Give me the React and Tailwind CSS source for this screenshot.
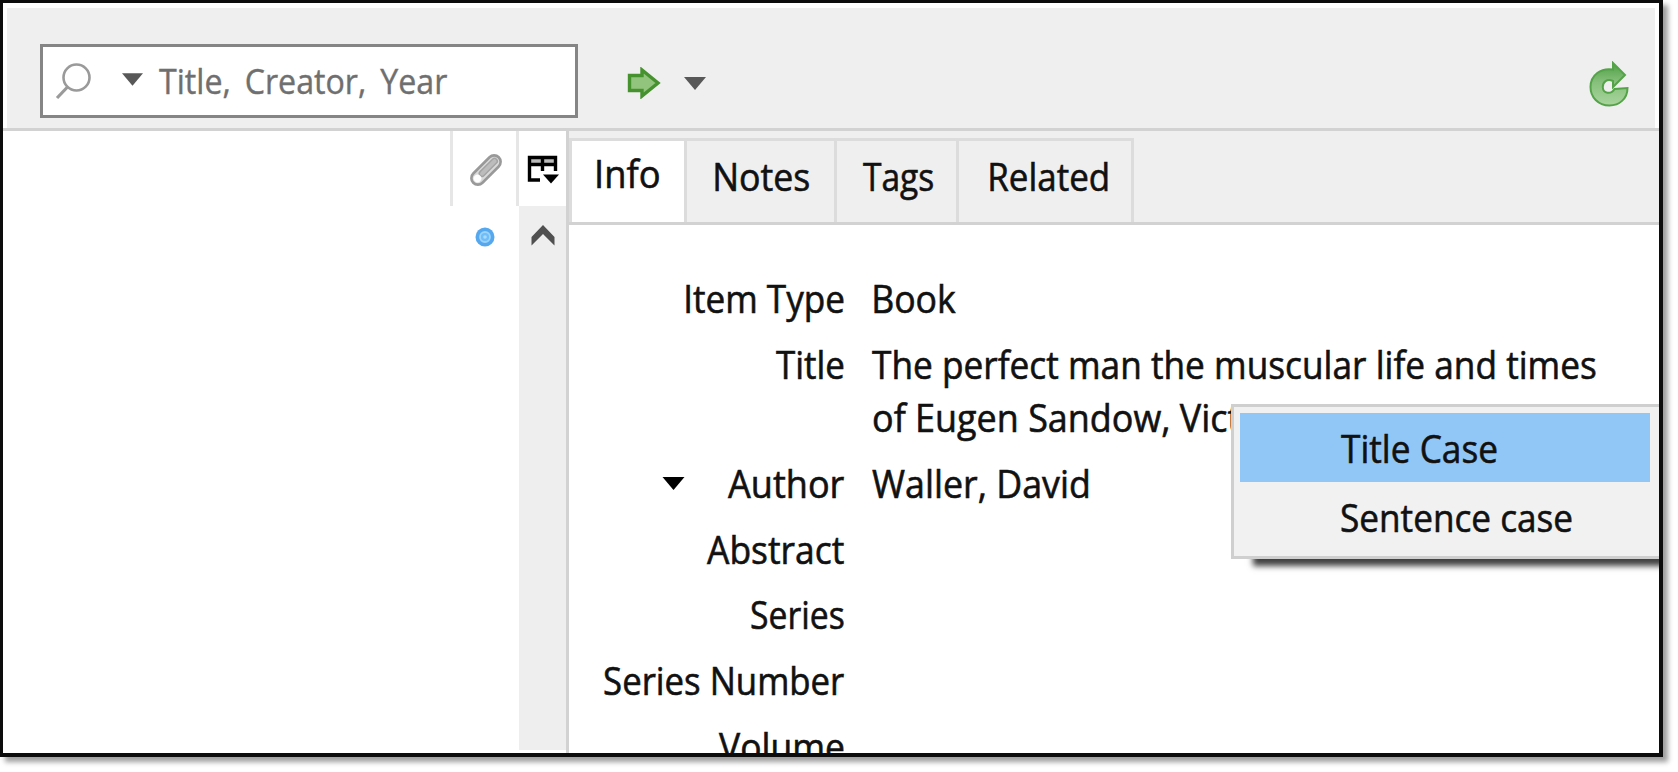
import { useLayoutEffect, useRef, useState } from "react";

// Condenses a run of text so that its ink fills exactly `width` pixels.
function Fit({ width, text, className = "" }) {
  const ref = useRef(null);
  const [t, setT] = useState({ s: 1, x: 0 });
  useLayoutEffect(() => {
    const cs = getComputedStyle(ref.current);
    const ctx = document.createElement("canvas").getContext("2d");
    ctx.font = `${cs.fontWeight} ${cs.fontSize} ${cs.fontFamily}`;
    ctx.wordSpacing = cs.wordSpacing;
    const m = ctx.measureText(text);
    const s = width / (m.actualBoundingBoxLeft + m.actualBoundingBoxRight);
    setT({ s, x: m.actualBoundingBoxLeft * s });
  }, [text, width]);
  return (
    <div className="shrink-0" style={{ width }}>
      <span
        ref={ref}
        className={`inline-block origin-left whitespace-nowrap ${className}`}
        style={{ transform: `translateX(${t.x}px) scaleX(${t.s})` }}
      >
        {text}
      </span>
    </div>
  );
}

function Caret({ className }) {
  return (
    <svg viewBox="0 0 22 13" className={className} fill="currentColor">
      <path d="M0 0H22L11 13Z" />
    </svg>
  );
}

function SearchIcon() {
  return (
    <svg viewBox="0 0 38 38" className="h-[38px] w-[38px] text-[#9a9a9a]" fill="none" stroke="currentColor" strokeWidth="2.6">
      <circle cx="21.5" cy="15.500" r="13" />
      <path d="M12.500 25L2 36" strokeWidth="3.200" />
    </svg>
  );
}

function GoArrow() {
  return (
    <svg viewBox="0 0 34 32" className="h-[32px] w-[34px]">
      <path d="M2.500 8.5H15V3L31 16L15 29V23.500H2.500Z" fill="#93c47d" stroke="#46922f" strokeWidth="3.400" />
    </svg>
  );
}

function SyncIcon() {
  return (
    <svg viewBox="0 0 40 46" className="h-[46px] w-[40px]">
      <defs>
        <linearGradient id="sync" x1="0" y1="0" x2="0" y2="1">
          <stop offset="0" stopColor="#4f9f43" />
          <stop offset="0.450" stopColor="#86c07c" />
          <stop offset="1" stopColor="#a9d59d" />
        </linearGradient>
      </defs>
      <path
        d="M24 2L36 14L24 26V20C18 17 13.500 21 13.800 26.500C14.200 32.500 22 34 25.500 28L38.500 27C38.500 38 30 44.500 20.500 44.500C9 44.500 1.500 36 1.500 26C1.500 14 12 6.500 24 8.500Z"
        fill="url(#sync)"
        stroke="#55a349"
        strokeWidth="2"
      />
    </svg>
  );
}

function ClipIcon() {
  return (
    <svg viewBox="0 0 34 34" className="h-[34px] w-[34px]">
      <g transform="rotate(-45 17 17)">
        <rect x="-1" y="10.500" width="36" height="13" rx="6.500" fill="#dadada" stroke="#999" strokeWidth="2.600" />
        <rect x="9" y="14" width="23" height="5.500" rx="2.700" fill="#bcbcbc" stroke="#a4a4a4" strokeWidth="1.500" />
        <circle cx="5" cy="17" r="3.800" fill="#fff" />
      </g>
    </svg>
  );
}

function ColumnsIcon() {
  return (
    <svg viewBox="0 0 32 30" className="h-[30px] w-[32px]">
      <rect x="2" y="3" width="26" height="6" fill="#bbb" />
      <path d="M13 25H2.500V2.500H28.500V16M2 9.500H28.500M15.500 2V16" fill="none" stroke="#000" strokeWidth="3.400" />
      <path d="M16 19.500H32L24 28.500Z" />
    </svg>
  );
}

const rows = [
  { label: "Item Type", w: 158, value: "Book", vw: 82, inset: true },
  { label: "Title", w: 68, value: "The perfect man the muscular life and times", vw: 724 },
  { value: "of Eugen Sandow, Vict", vw: 366, inset: true, joined: true },
  { label: "Author", w: 116, value: "Waller, David", vw: 216, caret: true },
  { label: "Abstract", w: 137 },
  { label: "Series", w: 93 },
  { label: "Series Number", w: 240 },
  { label: "Volume", w: 125 },
];

function Toolbar() {
  return (
    <div className="mx-[4px] mt-[5px] flex h-[120px] shrink-0 bg-[#efefef] pl-[33px] pt-[36px]">
      <div className="flex h-[74px] w-[538px] items-center border-[3px] border-[#858585] bg-white pl-[12px]">
        <SearchIcon />
        <Caret className="mb-[3px] ml-[29px] h-[13px] w-[21px] text-[#585858]" />
        <div className="ml-[16px] text-[35px] leading-[68px] text-[#6f6f6f] [word-spacing:6px]">
          <Fit text="Title, Creator, Year" width={288} className="[-webkit-text-stroke:0.4px_currentColor]" />
        </div>
      </div>
      <div className="flex h-[78px] flex-1 items-center pl-[49px]">
        <GoArrow />
        <Caret className="ml-[23px] h-[13px] w-[22px] text-[#585858]" />
        <div className="ml-auto mr-[26px] pt-[2px]">
          <SyncIcon />
        </div>
      </div>
    </div>
  );
}

function ItemsPane() {
  return (
    <div className="flex w-[563px] shrink-0 bg-white">
      <div className="w-[447px]" />
      <div className="flex w-[69px] flex-col items-center">
        <div className="flex h-[75px] w-full items-center justify-center border-x-[3px] border-[#e6e6e6] pl-[3px] pt-[2px]">
          <ClipIcon />
        </div>
        <svg viewBox="0 0 20 20" className="mt-[21px] h-[20px] w-[20px]">
          <circle cx="10" cy="10" r="9.500" fill="#56a8ee" />
          <circle cx="10" cy="10" r="5" fill="#6fbdf8" stroke="#9bd3fb" strokeWidth="1.800" />
          <circle cx="10" cy="10" r="1.800" fill="#a9dafd" />
        </svg>
      </div>
      <div className="flex flex-1 flex-col">
        <div className="flex h-[75px] items-center justify-center pl-[1px] pt-[3px]">
          <ColumnsIcon />
        </div>
        <div className="mb-[3px] flex flex-1 justify-center bg-[#eeeeee] pt-[19px]">
          <svg viewBox="0 0 24 21" className="h-[21px] w-[24px]" fill="#505050">
            <path d="M12 0L23.500 12V20.500L12 9L0.500 20.500V12Z" />
          </svg>
        </div>
      </div>
    </div>
  );
}

function Tabs() {
  return (
    <div className="flex h-[94px] shrink-0 border-b-[3px] border-[#d2d2d2] bg-[#efefef] pt-[7px] text-[37.500px] leading-[54px]">
      <div className="flex w-[118px] border-x-[3px] border-t-[3px] border-[#dcdcdc] bg-white pl-[25px] pt-[6px]">
        <Fit text="Info" width={62} />
      </div>
      <div className="flex w-[150px] border-r-[3px] border-t-[3px] border-[#dcdcdc] pl-[28px] pt-[9px]">
        <Fit text="Notes" width={94.500} />
      </div>
      <div className="flex w-[122px] border-r-[3px] border-t-[3px] border-[#dcdcdc] pl-[26px] pt-[9px]">
        <Fit text="Tags" width={70.500} />
      </div>
      <div className="flex w-[175px] border-r-[3px] border-t-[3px] border-[#dcdcdc] pl-[31px] pt-[9px]">
        <Fit text="Related" width={117.500} />
      </div>
    </div>
  );
}

function InfoForm() {
  return (
    <div className="flex flex-1 flex-col overflow-hidden bg-white pt-[35px] text-[37.500px] leading-[53.300px]">
      {rows.map((r, i) => (
        <div key={i} className={r.joined ? "flex h-[53.300px] shrink-0" : "mt-[12.400px] flex h-[53.300px] shrink-0"}>
          <div className="flex w-[275px] shrink-0 items-center justify-end">
            {r.caret && <Caret className="mr-auto ml-[93px] h-[13px] w-[23px] text-black" />}
            {r.label && <Fit text={r.label} width={r.w} />}
          </div>
          <div className={r.inset ? "ml-[30px] flex" : "ml-[28px] flex"}>
            {r.value && <Fit text={r.value} width={r.vw} />}
          </div>
        </div>
      ))}
    </div>
  );
}

function ContextMenu() {
  return (
    <div className="absolute left-[1231px] top-[404px] h-[180px] w-[428px] overflow-hidden text-[37.500px]">
      <div className="absolute left-[24px] top-[130px] h-[25px] w-[430px] shadow-[0_5px_6px_2px_rgba(0,0,0,0.75)]" />
      <div className="relative h-[155px] border-y-[3px] border-l-[3px] border-[#cfcfcf] bg-[#f1f1f1] pl-[6px] pt-[6px]">
        <div className="h-[69px] w-[410px] bg-[#91c7f6] pl-[101px] leading-[71px]">
          <Fit text="Title Case" width={156} />
        </div>
        <div className="h-[69px] w-[410px] pl-[101px] leading-[72px]">
          <Fit text="Sentence case" width={231} />
        </div>
      </div>
    </div>
  );
}

export default function App() {
  return (
    <div className="relative h-[772px] w-[1678px] overflow-hidden bg-white font-['Open_Sans',sans-serif] text-[#111] [-webkit-text-stroke:0.6px_currentColor]">
      <div className="flex h-[757px] w-[1663px] flex-col border-[3px] border-r-[4px] border-b-[4px] border-[#0c0c0c] bg-white shadow-[5px_5px_5px_0px_rgba(0,0,0,0.38)]">
        <Toolbar />
        <div className="h-[3px] shrink-0 bg-[#d2d2d2]" />
        <div className="flex min-h-0 flex-1">
          <ItemsPane />
          <div className="flex min-w-0 flex-1 flex-col border-l-[3px] border-[#d2d2d2]">
            <Tabs />
            <InfoForm />
          </div>
        </div>
      </div>
      <ContextMenu />
    </div>
  );
}
